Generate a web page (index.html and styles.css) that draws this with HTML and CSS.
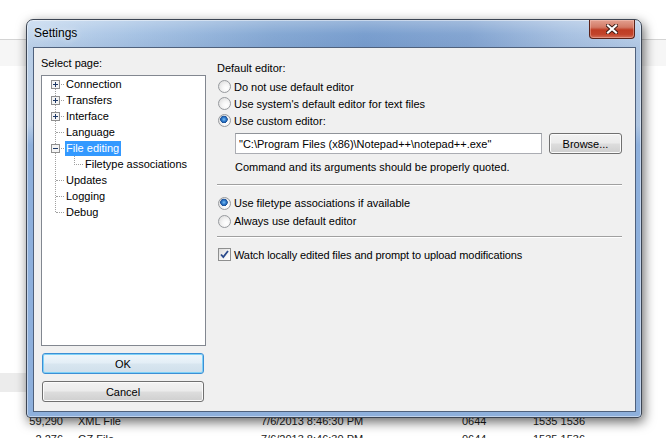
FILE: index.html
```html
<!DOCTYPE html>
<html>
<head>
    <title>Settings</title>
    <link rel="stylesheet" href="styles.css">
</head>
<body>

<div class="desktop">
    <div class="list-head"></div>
    <div class="list-band"></div>
    <div class="list-rows">
        <div class="list-row">
            <span class="col-size">59,290</span>
            <span class="col-type">XML File</span>
            <span class="col-date">7/6/2013 8:46:30 PM</span>
            <span class="col-perm">0644</span>
            <span class="col-owner">1535 1536</span>
        </div>
        <div class="list-row">
            <span class="col-size">2,276</span>
            <span class="col-type">GZ File</span>
            <span class="col-date">7/6/2013 8:46:30 PM</span>
            <span class="col-perm">0644</span>
            <span class="col-owner">1535 1536</span>
        </div>
    </div>
</div>

<div class="window">
    <div class="titlebar">
        <span class="title">Settings</span>
        <div class="close-btn">
            <svg width="12" height="10" viewBox="0 0 12 10">
                <path d="M2 1.5 L10 8.5 M10 1.5 L2 8.5" stroke="#3b1a14" stroke-width="4" stroke-linecap="square"/>
                <path d="M2 1.5 L10 8.5 M10 1.5 L2 8.5" stroke="#ffffff" stroke-width="2.2" stroke-linecap="square"/>
            </svg>
        </div>
    </div>

    <div class="frame-body">
        <div class="client">
            <!-- page list -->
            <div class="left-col">
                <div class="label">Select page:</div>
                <div class="tree">
                    <div class="tree-lines"></div>
                    <div class="tree-row has-box">
                        <svg class="expander" width="9" height="9" viewBox="0 0 9 9"><rect x="0.5" y="0.5" width="8" height="8" fill="#f4f4f4" stroke="#8f8f8f"/><path d="M2 4.5 H7 M4.5 2 V7" stroke="#1e3966"/></svg>
                        <span class="tree-label">Connection</span>
                    </div>
                    <div class="tree-row has-box">
                        <svg class="expander" width="9" height="9" viewBox="0 0 9 9"><rect x="0.5" y="0.5" width="8" height="8" fill="#f4f4f4" stroke="#8f8f8f"/><path d="M2 4.5 H7 M4.5 2 V7" stroke="#1e3966"/></svg>
                        <span class="tree-label">Transfers</span>
                    </div>
                    <div class="tree-row has-box">
                        <svg class="expander" width="9" height="9" viewBox="0 0 9 9"><rect x="0.5" y="0.5" width="8" height="8" fill="#f4f4f4" stroke="#8f8f8f"/><path d="M2 4.5 H7 M4.5 2 V7" stroke="#1e3966"/></svg>
                        <span class="tree-label">Interface</span>
                    </div>
                    <div class="tree-row">
                        <span class="tree-label">Language</span>
                    </div>
                    <div class="tree-row has-box">
                        <svg class="expander" width="9" height="9" viewBox="0 0 9 9"><rect x="0.5" y="0.5" width="8" height="8" fill="#f4f4f4" stroke="#8f8f8f"/><path d="M2 4.5 H7" stroke="#1e3966"/></svg>
                        <span class="tree-label selected">File editing</span>
                    </div>
                    <div class="tree-row child">
                        <span class="tree-label">Filetype associations</span>
                    </div>
                    <div class="tree-row">
                        <span class="tree-label">Updates</span>
                    </div>
                    <div class="tree-row">
                        <span class="tree-label">Logging</span>
                    </div>
                    <div class="tree-row">
                        <span class="tree-label">Debug</span>
                    </div>
                </div>
                <button class="btn btn-default wide">OK</button>
                <button class="btn wide">Cancel</button>
            </div>

            <!-- file editing page -->
            <div class="right-col">
                <div class="label">Default editor:</div>
                <div class="group">
                    <div class="option"><span class="radio"></span>Do not use default editor</div>
                    <div class="option"><span class="radio"></span>Use system's default editor for text files</div>
                    <div class="option"><span class="radio on"></span>Use custom editor:</div>
                </div>
                <div class="editor-row">
                    <input class="path-input" type="text" value="&quot;C:\Program Files (x86)\Notepad++\notepad++.exe&quot;">
                    <button class="btn browse">Browse...</button>
                </div>
                <div class="note">Command and its arguments should be properly quoted.</div>
                <div class="separator"></div>
                <div class="group tall">
                    <div class="option"><span class="radio on"></span>Use filetype associations if available</div>
                    <div class="option"><span class="radio"></span>Always use default editor</div>
                </div>
                <div class="separator second"></div>
                <div class="option check-row">
                    <span class="checkbox">
                        <svg width="11" height="11" viewBox="0 0 11 11"><path d="M2 5.5 L4.3 8 L9 2" fill="none" stroke="#2a4a8c" stroke-width="1.8"/></svg>
                    </span>Watch locally edited files and prompt to upload modifications
                </div>
            </div>
        </div>
    </div>
</div>

</body>
</html>
```

FILE: styles.css
```css
html, body {
    margin: 0;
    padding: 0;
    overflow: hidden;
}
body {
    font-family: "Liberation Sans", Arial, sans-serif;
    font-size: 11px;
    color: #000;
    background: #fff;
}

/* background file list */
.desktop {
    height: 438px;
    overflow: hidden;
}
.list-head {
    margin-top: 39px;
    height: 27px;
    border-top: 1px solid #d4d4d4;
    background: #f6f6f6;
    box-sizing: border-box;
}
.list-band {
    margin-top: 307px;
    width: 60px;
    height: 19px;
    background: #ececec;
}
.list-rows {
    margin-top: 21px;
}
.list-row {
    display: grid;
    grid-template-columns: 63px 198px 201px 71px 1fr;
    height: 18px;
    line-height: 16px;
    color: #1a1a1a;
}
.list-row .col-size {
    text-align: right;
}
.list-row .col-type {
    padding-left: 15px;
}

/* dialog window */
.window {
    position: absolute;
    left: 26px;
    top: 19px;
    width: 616px;
    height: 399px;
    box-sizing: border-box;
    border: 1px solid #3d4654;
    border-radius: 7px 7px 4px 4px;
    box-shadow: 2px 4px 12px rgba(0, 0, 0, 0.6), inset 0 0 0 1px rgba(255, 255, 255, 0.45);
    background:
        linear-gradient(180deg, rgba(143, 178, 222, 0) 0, rgba(143, 178, 222, 0) 105px, #8eb0dc 125px, #8eb0dc 100%),
        linear-gradient(180deg, rgba(255, 255, 255, 0.25) 0, rgba(255, 255, 255, 0) 14px, rgba(60, 90, 140, 0.08) 27px),
        linear-gradient(90deg, #c4d8ee 0%, #a7c3e4 18%, #86a9d4 40%, #7a9fcf 55%, #85a6d2 72%, #a9c2e2 88%, #b9cfe9 100%);
}
.titlebar {
    display: flex;
    justify-content: space-between;
    align-items: flex-start;
    height: 27px;
    padding: 0 6px 0 7px;
}
.title {
    padding-top: 5px;
    font-size: 12px;
    line-height: 16px;
    color: #000;
    text-shadow: 0 0 6px rgba(255, 255, 255, 0.9);
}
.close-btn {
    width: 46px;
    height: 19px;
    box-sizing: border-box;
    border: 1px solid #5a2219;
    border-top: none;
    border-radius: 0 0 4px 4px;
    background: linear-gradient(180deg, #e3a090 0%, #d27a66 40%, #bf3d24 55%, #c2432a 80%, #d3705a 100%);
    box-shadow: inset 0 0 0 1px rgba(255, 210, 200, 0.4);
    display: flex;
    align-items: center;
    justify-content: center;
}
.frame-body {
    padding: 0 5px 5px 6px;
}
.client {
    display: flex;
    gap: 11px;
    height: 365px;
    box-sizing: border-box;
    border: 1px solid #4f617c;
    background: #f0f0f0;
}

.label {
    line-height: 15px;
    height: 15px;
}

/* left column */
.left-col {
    width: 165px;
    padding: 8px 0 0 7px;
    display: flex;
    flex-direction: column;
}
.tree {
    position: relative;
    margin-top: 4px;
    height: 271px;
    box-sizing: border-box;
    border: 1px solid #828790;
    background: #fff;
}
.tree-lines {
    position: absolute;
    left: 13px;
    top: 8px;
    height: 128px;
    border-left: 1px dotted #a0a0a0;
}
.tree-row {
    position: relative;
    display: flex;
    align-items: center;
    height: 16px;
    padding-left: 23px;
}
.tree-row::before {
    content: "";
    position: absolute;
    left: 14px;
    top: 8px;
    width: 8px;
    border-top: 1px dotted #a0a0a0;
}
.tree-row.has-box::before {
    left: 19px;
    width: 3px;
}
.tree-row.child {
    padding-left: 42px;
}
.tree-row.child::before {
    left: 32px;
    top: 0;
    width: 8px;
    height: 8px;
    border-left: 1px dotted #a0a0a0;
    border-top: none;
    border-bottom: 1px dotted #a0a0a0;
}
.expander {
    position: absolute;
    left: 9px;
    top: 4px;
}
.tree-label {
    padding: 0 2px 0 1px;
    line-height: 15px;
}
.tree-label.selected {
    background: #3399ff;
    color: #fff;
}

/* buttons */
.btn {
    font-family: inherit;
    font-size: 11px;
    color: #000;
    height: 21px;
    padding: 0;
    border: 1px solid #707070;
    border-radius: 3px;
    background: linear-gradient(180deg, #f2f2f2 0%, #ebebeb 48%, #dddddd 52%, #cfcfcf 100%);
    box-shadow: inset 0 0 0 1px #fbfbfb;
}
.btn.wide {
    width: 162px;
    margin-left: 1px;
    margin-top: 7px;
}
.btn-default {
    border-color: #3c8fd5;
    background: linear-gradient(180deg, #eef6fb 0%, #e3eef6 48%, #d8e6f0 52%, #cfdfeb 100%);
    box-shadow: inset 0 0 0 1px #7ed1f7;
}

/* right column */
.right-col {
    flex: 1;
    padding: 13px 13px 0 0;
}
.group {
    margin-top: 2px;
}
.group.tall .option {
    height: 18px;
}
.option {
    display: flex;
    align-items: center;
    height: 17px;
    gap: 3px;
}
.radio {
    width: 13px;
    height: 13px;
    margin-left: 1px;
    box-sizing: border-box;
    border-radius: 50%;
    border: 1px solid #979a9e;
    background: radial-gradient(circle at 65% 65%, #ffffff 0, #f6f6f6 35%, #e0e0e0 80%, #d2d2d2 100%);
}
.radio.on {
    background:
        radial-gradient(circle at 45% 40%, #7fc0f2 0, #2f7ccd 2px, #1c4f96 3.5px, rgba(0, 0, 0, 0) 4px),
        radial-gradient(circle at 65% 65%, #ffffff 0, #f6f6f6 35%, #e0e0e0 80%, #d2d2d2 100%);
}
.checkbox {
    width: 13px;
    height: 13px;
    margin-left: 1px;
    box-sizing: border-box;
    border: 1px solid #8e8f8f;
    background: linear-gradient(135deg, #dcdcdc 0%, #f4f4f4 60%, #ffffff 100%);
    display: flex;
    align-items: center;
    justify-content: center;
}
.editor-row {
    display: flex;
    align-items: center;
    gap: 7px;
    margin: 4px 0 0 18px;
}
.path-input {
    width: 307px;
    height: 21px;
    box-sizing: border-box;
    border: 1px solid #abadb3;
    border-top-color: #8f9399;
    padding: 0 3px;
    font-family: inherit;
    font-size: 11px;
    color: #000;
    background: #fff;
}
.browse {
    width: 73px;
}
.note {
    margin: 6px 0 0 18px;
    line-height: 15px;
}
.separator {
    margin-top: 9px;
    border-top: 1px solid #a0a0a0;
    border-bottom: 1px solid #fff;
}
.group.tall {
    margin-top: 8px;
}
.separator.second {
    margin-top: 6px;
}
.check-row {
    margin-top: 8px;
    letter-spacing: -0.1px;
}
```
